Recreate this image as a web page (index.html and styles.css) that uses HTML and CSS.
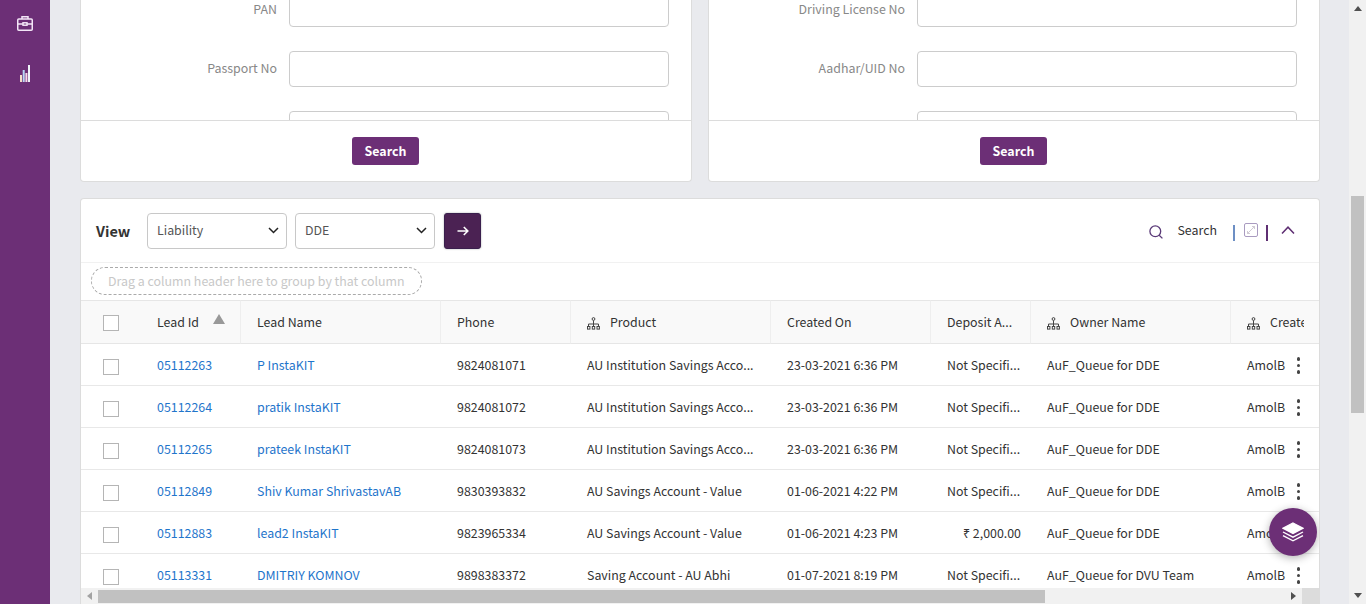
FILE: index.html
```html
<!DOCTYPE html>
<html lang="en">
<head>
    <meta charset="UTF-8">
    <title>Leads</title>
    <link rel="stylesheet" href="styles.css">
</head>
<body>
<svg class="svg-defs" width="0" height="0">
    <symbol id="hier" viewBox="0 0 13 13">
        <g fill="none" stroke="#444" stroke-width="1">
            <circle cx="6.5" cy="2" r="1.4"/>
            <path d="M6.5 3.5V7M1.5 9V7H11.5V9M6.5 7V9"/>
            <rect x="0.5" y="9.5" width="2.4" height="2.6"/>
            <rect x="5.3" y="9.5" width="2.4" height="2.6"/>
            <rect x="10" y="9.5" width="2.4" height="2.6"/>
        </g>
    </symbol>
</svg>

<div class="page">
    <nav class="sidebar">
        <svg class="side-icon case" width="16" height="15" viewBox="0 0 16 15" fill="none" stroke="#f3e6f7" stroke-width="1.5">
            <rect x="0.75" y="3" width="14.5" height="11.25" rx="1"/>
            <path d="M5 3V0.75H11V3M0.75 8H6M10 8H15.25"/>
            <rect x="6" y="6.8" width="4" height="2.4"/>
        </svg>
        <svg class="side-icon" width="10" height="17" viewBox="0 0 10 17">
            <rect x="0" y="10" width="2" height="7" fill="#f5dfc8"/>
            <rect x="2.7" y="5" width="2" height="12" fill="#b9d8f5"/>
            <rect x="5.4" y="8" width="2" height="9" fill="#f5d8e8"/>
            <rect x="8" y="0" width="2" height="17" fill="#eef3f8"/>
        </svg>
    </nav>

    <main class="content">
        <div class="forms">
            <section class="form-card">
                <div class="form-body">
                    <div class="field field-cut"><label>PAN</label><div class="input"></div></div>
                    <div class="field"><label>Passport No</label><div class="input"></div></div>
                    <div class="field"><label></label><div class="input"></div></div>
                </div>
                <div class="form-foot"><button class="btn-search">Search</button></div>
            </section>
            <section class="form-card">
                <div class="form-body">
                    <div class="field field-cut"><label>Driving License No</label><div class="input"></div></div>
                    <div class="field"><label>Aadhar/UID No</label><div class="input"></div></div>
                    <div class="field"><label></label><div class="input"></div></div>
                </div>
                <div class="form-foot"><button class="btn-search">Search</button></div>
            </section>
        </div>

        <section class="grid-card">
            <div class="toolbar">
                <span class="view-label">View</span>
                <div class="select select-first">Liability
                    <svg width="11" height="7" viewBox="0 0 11 7" fill="none" stroke="#222" stroke-width="1.5"><path d="M1 1L5.5 5.5L10 1"/></svg>
                </div>
                <div class="select">DDE
                    <svg width="11" height="7" viewBox="0 0 11 7" fill="none" stroke="#222" stroke-width="1.5"><path d="M1 1L5.5 5.5L10 1"/></svg>
                </div>
                <button class="btn-go">
                    <svg width="12" height="10" viewBox="0 0 12 10" fill="none" stroke="#fff" stroke-width="1.6"><path d="M0.5 5H10.5M6.8 1L10.8 5L6.8 9"/></svg>
                </button>
                <div class="tools">
                    <svg class="tool-search" width="14" height="14" viewBox="0 0 14 14" fill="none" stroke="#5a3a78" stroke-width="1.3"><circle cx="6.3" cy="6.3" r="5.4"/><path d="M10.2 10.2L13.4 13.4"/></svg>
                    <span class="tool-label">Search</span>
                    <span class="bar bar-blue"></span>
                    <svg class="tool-expand" width="14" height="14" viewBox="0 0 14 14" fill="none"><rect x="0.5" y="0.5" width="13" height="13" rx="1.5" stroke="#a99bc0"/><path d="M3.5 10.5L10.5 3.5M8 3.5H10.5V6M3.5 8V10.5H6" stroke="#c4bcc9" stroke-width="0.8"/></svg>
                    <span class="bar bar-purple"></span>
                    <svg class="tool-up" width="14" height="8" viewBox="0 0 14 8" fill="none" stroke="#5f2f73" stroke-width="1.5"><path d="M1 7.5L7 1.2L13 7.5"/></svg>
                </div>
            </div>

            <div class="group-row"><div class="group-pill">Drag a column header here to group by that column</div></div>

            <div class="grid-wrap">
                <table class="grid">
                    <colgroup>
                        <col class="c-check"><col class="c-id"><col class="c-name"><col class="c-phone"><col class="c-product"><col class="c-date"><col class="c-dep"><col class="c-owner"><col class="c-creat">
                    </colgroup>
                    <thead>
                        <tr>
                            <th class="cell-check"><span class="box"></span></th>
                            <th class="th-id">Lead Id<span class="sort"></span></th>
                            <th>Lead Name</th>
                            <th>Phone</th>
                            <th><svg class="hier"><use href="#hier"/></svg>Product</th>
                            <th>Created On</th>
                            <th>Deposit A...</th>
                            <th><svg class="hier"><use href="#hier"/></svg>Owner Name</th>
                            <th class="th-last"><svg class="hier"><use href="#hier"/></svg><span class="clip-head">Created By</span></th>
                        </tr>
                    </thead>
                    <tbody>
                        <tr>
                            <td class="cell-check"><span class="box"></span></td>
                            <td><a class="link">05112263</a></td>
                            <td><a class="link">P InstaKIT</a></td>
                            <td>9824081071</td>
                            <td>AU Institution Savings Acco...</td>
                            <td>23-03-2021 6:36 PM</td>
                            <td>Not Specifi...</td>
                            <td>AuF_Queue for DDE</td>
                            <td class="td-last">AmolB<span class="dots"><i></i><i></i><i></i></span></td>
                        </tr>
                        <tr>
                            <td class="cell-check"><span class="box"></span></td>
                            <td><a class="link">05112264</a></td>
                            <td><a class="link">pratik InstaKIT</a></td>
                            <td>9824081072</td>
                            <td>AU Institution Savings Acco...</td>
                            <td>23-03-2021 6:36 PM</td>
                            <td>Not Specifi...</td>
                            <td>AuF_Queue for DDE</td>
                            <td class="td-last">AmolB<span class="dots"><i></i><i></i><i></i></span></td>
                        </tr>
                        <tr>
                            <td class="cell-check"><span class="box"></span></td>
                            <td><a class="link">05112265</a></td>
                            <td><a class="link">prateek InstaKIT</a></td>
                            <td>9824081073</td>
                            <td>AU Institution Savings Acco...</td>
                            <td>23-03-2021 6:36 PM</td>
                            <td>Not Specifi...</td>
                            <td>AuF_Queue for DDE</td>
                            <td class="td-last">AmolB<span class="dots"><i></i><i></i><i></i></span></td>
                        </tr>
                        <tr>
                            <td class="cell-check"><span class="box"></span></td>
                            <td><a class="link">05112849</a></td>
                            <td><a class="link">Shiv Kumar ShrivastavAB</a></td>
                            <td>9830393832</td>
                            <td>AU Savings Account - Value</td>
                            <td>01-06-2021 4:22 PM</td>
                            <td>Not Specifi...</td>
                            <td>AuF_Queue for DDE</td>
                            <td class="td-last">AmolB<span class="dots"><i></i><i></i><i></i></span></td>
                        </tr>
                        <tr>
                            <td class="cell-check"><span class="box"></span></td>
                            <td><a class="link">05112883</a></td>
                            <td><a class="link">lead2 InstaKIT</a></td>
                            <td>9823965334</td>
                            <td>AU Savings Account - Value</td>
                            <td>01-06-2021 4:23 PM</td>
                            <td class="num">₹ 2,000.00</td>
                            <td>AuF_Queue for DDE</td>
                            <td class="td-last">AmolB<span class="dots"><i></i><i></i><i></i></span></td>
                        </tr>
                        <tr>
                            <td class="cell-check"><span class="box"></span></td>
                            <td><a class="link">05113331</a></td>
                            <td><a class="link">DMITRIY KOMNOV</a></td>
                            <td>9898383372</td>
                            <td>Saving Account - AU Abhi</td>
                            <td>01-07-2021 8:19 PM</td>
                            <td>Not Specifi...</td>
                            <td>AuF_Queue for DVU Team</td>
                            <td class="td-last">AmolB<span class="dots"><i></i><i></i><i></i></span></td>
                        </tr>
                    </tbody>
                </table>
                <button class="fab">
                    <svg width="22" height="20" viewBox="0 0 22 20" fill="none" stroke="#fff" stroke-width="1.4"><path d="M11 1L21 6.2L11 11.4L1 6.2Z" fill="#fff"/><path d="M1 10L11 15.2L21 10M1 13.6L11 18.8L21 13.6"/></svg>
                </button>
            </div>

            <div class="hscroll">
                <span class="scroll-btn"><span class="arrow arrow-left"></span></span>
                <div class="hscroll-track"><div class="hscroll-thumb"></div></div>
                <span class="scroll-btn"><span class="arrow arrow-right"></span></span>
                <span class="scroll-corner"></span>
            </div>
        </section>
    </main>

    <div class="vscroll">
        <span class="vscroll-btn"><span class="arrow arrow-up"></span></span>
        <div class="vscroll-space"></div>
        <div class="vscroll-thumb"></div>
        <div class="vscroll-rest"></div>
        <span class="vscroll-btn"><span class="arrow arrow-down"></span></span>
    </div>
</div>
</body>
</html>
```

FILE: styles.css
```css
* {
    box-sizing: border-box;
}

html, body {
    margin: 0;
    height: 100%;
    overflow: hidden;
}

body {
    font-family: "Noto Sans CJK SC", "Noto Sans", sans-serif;
    font-size: 12.4px;
    color: #333;
    background-color: #e9eaee;
}

.svg-defs {
    display: block;
    height: 0;
}

.page {
    display: flex;
    height: 604px;
}

/* left bar */
.sidebar {
    width: 50px;
    flex: none;
    background-color: #6c2f76;
    display: flex;
    flex-direction: column;
    align-items: center;
    padding-top: 16px;
}

.side-icon.case {
    margin-bottom: 34px;
}

.content {
    width: 1299px;
    flex: none;
    padding: 0 29px 0 30px;
    overflow: hidden;
}

/* form cards on top */
.forms {
    display: flex;
    gap: 16px;
    margin-bottom: 16px;
}

.form-card {
    flex: 1;
    height: 182px;
    background-color: #fff;
    border: 1px solid #dcdcdc;
    border-top: 0;
    border-radius: 0 0 4px 4px;
    display: flex;
    flex-direction: column;
}

.form-body {
    height: 120px;
    overflow: hidden;
    flex: none;
}

.field {
    display: flex;
    align-items: center;
    height: 36px;
    margin-top: 24px;
}

.field-cut {
    height: 27px;
    margin-top: 0;
    align-items: flex-end;
}

.field label {
    width: 208px;
    flex: none;
    text-align: right;
    padding: 0 12px 3px 0;
    color: #888;
}

.field-cut label {
    padding-bottom: 9px;
}

.input {
    width: 380px;
    height: 36px;
    flex: none;
    border: 1px solid #ccc;
    border-radius: 4px;
    background-color: #fff;
}

.form-foot {
    flex: 1;
    border-top: 1px solid #dcdcdc;
    display: flex;
    justify-content: center;
    padding: 16px 1px 0 0;
}

.btn-search {
    width: 67px;
    height: 28px;
    border: 0;
    border-radius: 3px;
    background-color: #6c2f76;
    color: #fff;
    font-family: inherit;
    font-size: 12.4px;
    font-weight: 700;
    padding: 0;
}

/* grid card */
.grid-card {
    background-color: #fff;
    border: 1px solid #dcdcdc;
    border-bottom: 0;
    border-radius: 4px 4px 0 0;
    height: 406px;
    display: flex;
    flex-direction: column;
}

.toolbar {
    height: 64px;
    flex: none;
    display: flex;
    align-items: center;
    padding: 0 0 0 15px;
    border-bottom: 1px solid #f1f1f1;
}

.view-label {
    font-size: 14.5px;
    font-weight: 700;
    color: #333;
    width: 51px;
}

.select {
    width: 140px;
    height: 36px;
    border: 1px solid #c8c8c8;
    border-radius: 4px;
    display: flex;
    align-items: center;
    justify-content: space-between;
    padding: 0 7px 2px 9px;
    color: #555;
}

.select svg {
    margin-top: 2px;
}

.select-first {
    margin-right: 8px;
}

.btn-go {
    width: 37px;
    height: 36px;
    margin-left: 9px;
    border: 1px solid #3a1f4d;
    border-radius: 3px;
    background-color: #4b2253;
    box-shadow: 0 0 2px rgba(0, 0, 0, 0.35);
    display: flex;
    align-items: center;
    justify-content: center;
    padding: 0;
}

.tools {
    margin-left: auto;
    display: flex;
    align-items: center;
    padding-right: 24px;
}

.tool-search {
    margin-top: 3px;
}

.tool-label {
    margin: 0 0 2px 14px;
    color: #333;
}

.bar {
    width: 2px;
    height: 16px;
    margin-top: 5px;
}

.bar-blue {
    margin-left: 16px;
    background-color: #6d8fc4;
}

.bar-purple {
    margin-left: 8px;
    background-color: #5f2f73;
}

.tool-expand {
    margin-left: 9px;
    margin-bottom: 1px;
}

.tool-up {
    margin-left: 13px;
    margin-bottom: 1px;
}

.group-row {
    height: 37px;
    flex: none;
    padding: 4px 0 0 10px;
}

.group-pill {
    width: 331px;
    height: 28px;
    border: 1px dashed #aaa;
    border-radius: 14px;
    color: #c8c8c8;
    line-height: 26px;
    padding-left: 16px;
}

/* table */
.grid-wrap {
    flex: 1;
    position: relative;
    overflow: hidden;
}

.grid {
    border-collapse: separate;
    border-spacing: 0;
    table-layout: fixed;
    width: 1238px;
}

.c-check { width: 60px; }
.c-id { width: 100px; }
.c-name { width: 200px; }
.c-phone { width: 130px; }
.c-product { width: 200px; }
.c-date { width: 160px; }
.c-dep { width: 100px; }
.c-owner { width: 200px; }
.c-creat { width: 88px; }

.grid th {
    height: 44px;
    background-color: #f9f9f9;
    border-top: 1px solid #e6e6e6;
    border-bottom: 1px solid #e6e6e6;
    border-right: 1px solid #eee;
    font-weight: 400;
    text-align: left;
    padding: 0 0 0 16px;
    color: #333;
    white-space: nowrap;
}

.grid td {
    height: 42px;
    border-bottom: 1px solid #e8e8e8;
    padding: 1px 0 0 16px;
    color: #333;
    white-space: nowrap;
    overflow: hidden;
}

.grid th.cell-check {
    padding: 2px 0 0 22px;
    border-right: 0;
}

.grid td.cell-check {
    padding: 4px 0 0 22px;
}

.grid th.th-last {
    border-right: 0;
    overflow: hidden;
}

.box {
    display: block;
    width: 16px;
    height: 16px;
    border: 1px solid #b5b5b5;
    background-color: #fff;
}

.sort {
    display: inline-block;
    width: 0;
    height: 0;
    margin-left: 14px;
    vertical-align: 3px;
    border-left: 6px solid transparent;
    border-right: 6px solid transparent;
    border-bottom: 10px solid #999;
}

.hier {
    width: 13px;
    height: 13px;
    margin-right: 10px;
    vertical-align: -3px;
}

.link {
    color: #1f75cb;
}

.grid td.num {
    text-align: right;
    padding-right: 10px;
}

.clip-head {
    display: inline-block;
    width: 34px;
    overflow: hidden;
    white-space: nowrap;
    vertical-align: bottom;
}

.td-last {
    position: relative;
}

.dots {
    position: absolute;
    right: 19px;
    top: 13px;
    display: flex;
    flex-direction: column;
    gap: 3px;
}

.dots i {
    display: block;
    width: 3.5px;
    height: 3.5px;
    border-radius: 50%;
    background-color: #444;
}

.fab {
    position: absolute;
    top: 208px;
    right: 2px;
    width: 48px;
    height: 48px;
    padding: 0;
    border: 0;
    border-radius: 50%;
    background-color: #6c2f76;
    box-shadow: 0 2px 8px rgba(0, 0, 0, 0.3);
    display: flex;
    align-items: center;
    justify-content: center;
}

/* fake scrollbars */
.hscroll {
    height: 16px;
    flex: none;
    background-color: #f1f1f1;
    display: flex;
    align-items: center;
}

.scroll-btn {
    width: 17px;
    height: 16px;
    flex: none;
    display: flex;
    align-items: center;
    justify-content: center;
}

.scroll-corner {
    width: 17px;
    height: 16px;
    flex: none;
    background-color: #dcdcdc;
}

.hscroll-track {
    flex: 1;
    height: 13px;
}

.hscroll-thumb {
    width: 947px;
    height: 13px;
    background-color: #c1c1c1;
}

.arrow {
    width: 0;
    height: 0;
    flex: none;
    border-style: solid;
    border-color: transparent;
}

.arrow-left {
    border-width: 4px 5px 4px 0;
    border-right-color: #a3a3a3;
}

.arrow-right {
    border-width: 4px 0 4px 5px;
    border-left-color: #505050;
}

.vscroll {
    width: 17px;
    flex: none;
    background-color: #f1f1f1;
    display: flex;
    flex-direction: column;
    align-items: center;
}

.vscroll-btn {
    width: 17px;
    height: 17px;
    flex: none;
    display: flex;
    align-items: center;
    justify-content: center;
}

.vscroll-space {
    height: 179px;
}

.vscroll-thumb {
    width: 13px;
    height: 217px;
    background-color: #c1c1c1;
}

.vscroll-rest {
    flex: 1;
}

.arrow-up {
    border-width: 0 4px 5px 4px;
    border-bottom-color: #505050;
}

.arrow-down {
    border-width: 5px 4px 0 4px;
    border-top-color: #505050;
}
```
